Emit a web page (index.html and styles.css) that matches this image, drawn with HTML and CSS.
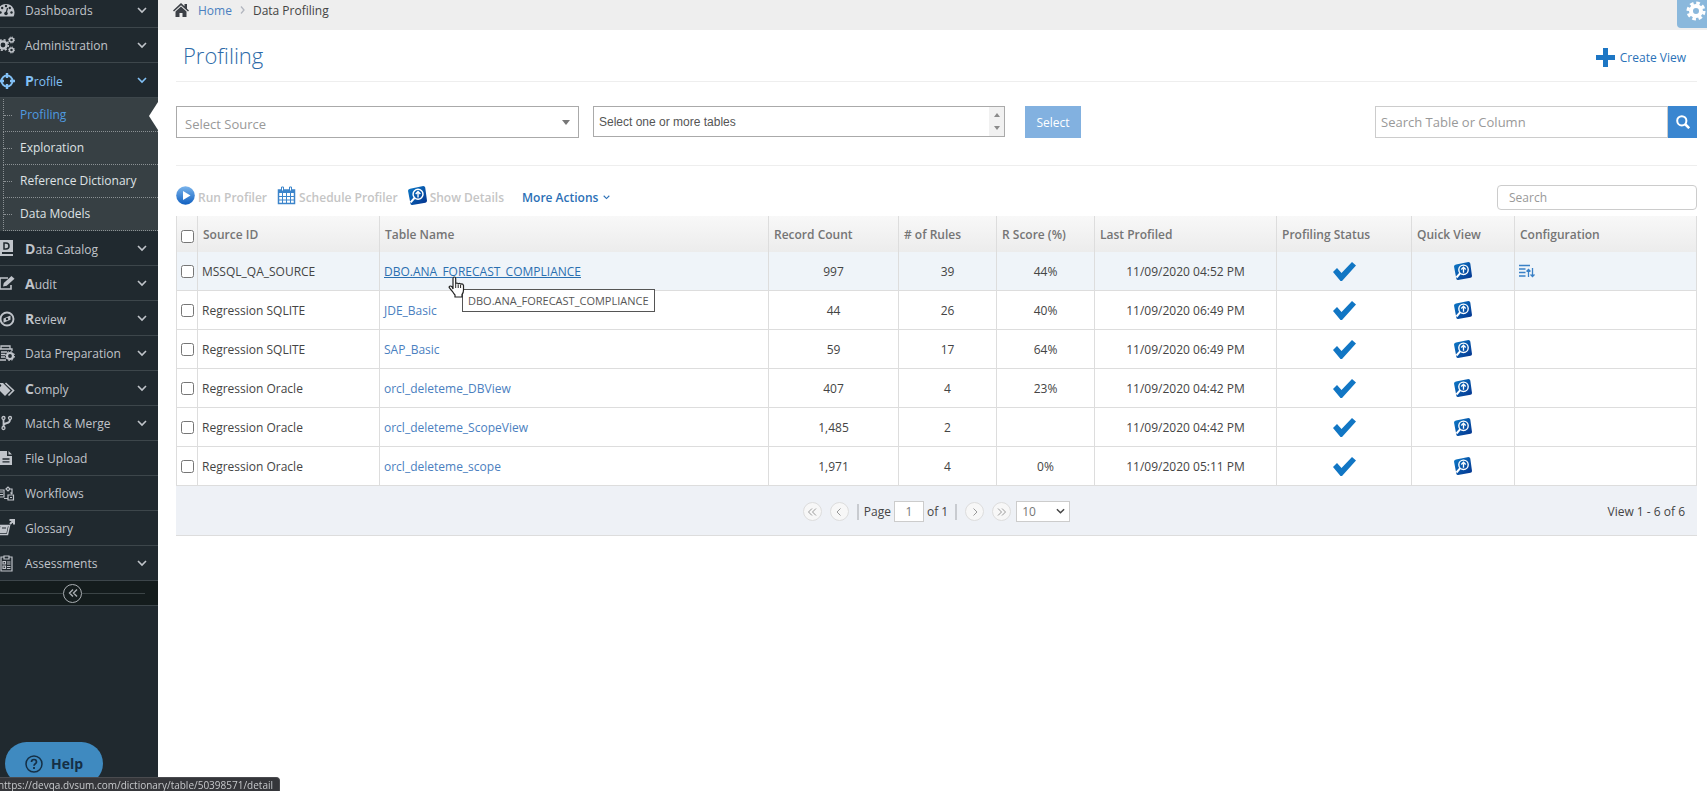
FILE: index.html
```
<!DOCTYPE html>
<html lang="en">

<head>
    <meta charset="UTF-8">
    <meta name="viewport" content="width=device-width, initial-scale=1.0">
    <title>Data Profiling</title>
    <link rel="stylesheet" href="styles.css">
</head>

<body>
    <!-- Shared icons -->
    <svg class="sprite" aria-hidden="true">
        <symbol id="chevron" viewBox="0 0 10 7"><path d="M1 1l4 4 4-4" fill="none" stroke="currentColor" stroke-width="1.6"/></symbol>
        <symbol id="check" viewBox="0 0 24 19"><path d="M1 10l4-4 4.500 5L20 0l4 3.500L10 19 8.500 19z" fill="#1176c4"/></symbol>
        <symbol id="quick" viewBox="0 0 18 18">
            <path d="M2 2.500L14.500 0q1.500 0 1.800 1.500L18 14q0 1.500-1.500 1.800L4 18q-1.500 0-1.700-1.500L0 4.500Q0 3 2 2.500z" fill="url(#tile)"/>
            <circle cx="9.500" cy="7.800" r="4.700" fill="none" stroke="#fff" stroke-width="1.400"/>
            <path d="M6.200 11.200L2.500 15.500" stroke="#fff" stroke-width="2" fill="none"/>
            <path d="M9.500 10.800V6.500M7.300 7.500l2.200-2.300 2.200 2.300" stroke="#fff" stroke-width="1.300" fill="none"/>
        </symbol>
        <defs>
            <linearGradient id="tile" x1="0" y1="0" x2="1" y2="1">
                <stop offset="0" stop-color="#0e7cc9"/>
                <stop offset="1" stop-color="#03318c"/>
            </linearGradient>
            <linearGradient id="ball" x1="0" y1="0" x2="0" y2="1">
                <stop offset="0" stop-color="#7ab4ec"/>
                <stop offset="1" stop-color="#0f5fc0"/>
            </linearGradient>
        </defs>
    </svg>

    <div class="layout">
        <nav class="sidebar">
            <ul class="menu">
                <li><a href="#">
                    <svg class="menu-icon" viewBox="0 0 18 18"><path d="M1.500 15.500A8.500 8.500 0 1 1 16.500 15.500z" fill="currentColor"/><g fill="#20292f"><circle cx="3.500" cy="11.500" r="1.200"/><circle cx="5.200" cy="7" r="1.200"/><circle cx="9" cy="5" r="1.200"/><circle cx="12.800" cy="7" r="1.200"/><circle cx="14.500" cy="11.500" r="1.200"/><circle cx="9" cy="12.500" r="1.800"/></g><path d="M9 12.500L10.500 7" stroke="#20292f" stroke-width="1.200"/></svg>
                    <span>Dashboards</span><svg class="arrow"><use href="#chevron"/></svg></a></li>
                <li><a href="#">
                    <svg class="menu-icon" viewBox="0 0 18 18" fill="none" stroke="currentColor"><circle cx="6" cy="9" r="3.600" stroke-width="2.400"/><circle cx="6" cy="9" r="5.300" stroke-width="1.600" stroke-dasharray="2.100 2.060"/><circle cx="14.500" cy="4" r="2" stroke-width="1.500"/><circle cx="14.500" cy="4" r="3" stroke-dasharray="1.200 1.150"/><circle cx="14.500" cy="14" r="2" stroke-width="1.500"/><circle cx="14.500" cy="14" r="3" stroke-dasharray="1.200 1.150"/></svg>
                    <span>Administration</span><svg class="arrow"><use href="#chevron"/></svg></a></li>
                <li class="open"><a href="#">
                    <svg class="menu-icon" viewBox="0 0 18 18" fill="none" stroke="currentColor"><circle cx="10" cy="10" r="5.500" stroke-width="2"/><path d="M10 2v5M10 13v5M2 10h5M13 10h5" stroke-width="2.400"/></svg>
                    <span><b>P</b>rofile</span><svg class="arrow"><use href="#chevron"/></svg></a>
                    <ul class="submenu">
                        <li class="active"><a href="#">Profiling</a></li>
                        <li><a href="#">Exploration</a></li>
                        <li><a href="#">Reference Dictionary</a></li>
                        <li><a href="#">Data Models</a></li>
                    </ul>
                </li>
                <li><a href="#">
                    <svg class="menu-icon" viewBox="0 0 18 18"><path d="M2 1h14v12H5v2h11v2H4q-3 0-3-3V2z" fill="currentColor"/><path d="M7 4h2q3 0 3 3t-3 3H7z" fill="none" stroke="#20292f" stroke-width="1.500"/></svg>
                    <span><b>D</b>ata Catalog</span><svg class="arrow"><use href="#chevron"/></svg></a></li>
                <li><a href="#">
                    <svg class="menu-icon" viewBox="0 0 18 18"><path d="M11 4H3v11h11v-4" fill="none" stroke="currentColor" stroke-width="1.600"/><path d="M6 12.500l.8-3.500L14.500 2l3 2.700-7.800 7z" fill="currentColor"/></svg>
                    <span><b>A</b>udit</span><svg class="arrow"><use href="#chevron"/></svg></a></li>
                <li><a href="#">
                    <svg class="menu-icon" viewBox="0 0 18 18"><circle cx="10" cy="10" r="6.500" fill="none" stroke="currentColor" stroke-width="1.900"/><path d="M13.500 6.500v4.200l-7 3V9.500z" fill="currentColor"/><circle cx="10" cy="10" r="1.200" fill="#20292f"/></svg>
                    <span><b>R</b>eview</span><svg class="arrow"><use href="#chevron"/></svg></a></li>
                <li><a href="#">
                    <svg class="menu-icon" viewBox="0 0 18 18" fill="none" stroke="currentColor"><path d="M4 5V2h9v3M2 5h13v2M2 5v11h7M4 8h6M4 10.500h4M4 13h4" stroke-width="1.300"/><circle cx="13" cy="12" r="3" stroke-width="2.200"/><circle cx="13" cy="12" r="4.500" stroke-dasharray="1.800 1.730"/></svg>
                    <span>Data Preparation</span><svg class="arrow"><use href="#chevron"/></svg></a></li>
                <li><a href="#">
                    <svg class="menu-icon" viewBox="0 0 18 18"><path d="M0 4h6l7.500 7.500-5.500 5.500L0 9z" fill="currentColor"/><path d="M8.500 4l8 7.500-5 5" fill="none" stroke="currentColor" stroke-width="1.600"/><circle cx="3" cy="6.500" r="1.200" fill="#20292f"/></svg>
                    <span><b>C</b>omply</span><svg class="arrow"><use href="#chevron"/></svg></a></li>
                <li><a href="#">
                    <svg class="menu-icon" viewBox="0 0 18 18" fill="none" stroke="currentColor"><circle cx="6.500" cy="4" r="1.500" stroke-width="1.300"/><circle cx="13" cy="4" r="1.500" stroke-width="1.300"/><circle cx="6.500" cy="14" r="1.500" stroke-width="1.300"/><path d="M6.500 5.500v7M13 5.500q0 3-3 3.500t-3.500 2.500" stroke-width="1.800"/></svg>
                    <span>Match &amp; Merge</span><svg class="arrow"><use href="#chevron"/></svg></a></li>
                <li><a href="#">
                    <svg class="menu-icon" viewBox="0 0 18 18"><path d="M3 2h7v5h5v9H3zM11.500 2L15 5.500h-3.500z" fill="currentColor"/><path d="M5.500 10h7M5.500 12.800h7" stroke="#20292f" stroke-width="1.300"/></svg>
                    <span>File Upload</span></a></li>
                <li><a href="#">
                    <svg class="menu-icon" viewBox="0 0 18 18" fill="none" stroke="currentColor" stroke-width="1.200"><path d="M2 6h5v7H2M3 8h3M3 10.500h3M9 5l2-2 2 2-2 2zM13 5h2v5M15 10l-1.500-1.500M7 14.500h4M11 11h5.500v5H11zM13 13.500h2"/></svg>
                    <span>Workflows</span></a></li>
                <li><a href="#">
                    <svg class="menu-icon" viewBox="0 0 18 18" fill="none" stroke="currentColor"><path d="M3 6.500h9.500l-2 9H2" stroke-width="1.500"/><path d="M3.500 7l-2 7h8l1.500-7z" fill="currentColor" stroke="none"/><path d="M5 9h4" stroke="#20292f"/><path d="M12.500 1H17v4.500M17 1l-4 4" stroke-width="2"/></svg>
                    <span>Glossary</span></a></li>
                <li><a href="#">
                    <svg class="menu-icon" viewBox="0 0 18 18" fill="none" stroke="currentColor" stroke-width="1.200"><path d="M7 3H4v14h11V3h-3M7 2h5v3H7zM6 7.500h2.500V10H6zM6 12h2.500v2.500H6zM10 8h3.500M10 10h3.500M10 12.500h3.500M10 14.500h3.500"/></svg>
                    <span>Assessments</span><svg class="arrow"><use href="#chevron"/></svg></a></li>
            </ul>
            <div class="collapse">
                <button type="button" aria-label="Collapse menu"><svg viewBox="0 0 10 10"><path d="M5 1.500L1.500 5 5 8.500M9 1.500L5.500 5 9 8.500" fill="none" stroke="currentColor" stroke-width="1.400"/></svg></button>
            </div>
        </nav>

        <div class="content">
            <header class="breadcrumbs">
                <svg class="home" viewBox="0 0 16 14"><path d="M8 0l3.500 3.300V1H14v4.700L16 7.500l-1 1L8 2.200 1 8.500l-1-1z"/><path d="M8 3.500l5.500 5V14h-4v-4h-3v4h-4V8.500z"/></svg>
                <a href="#">Home</a>
                <svg class="crumb-sep" viewBox="0 0 5 8"><path d="M1 .5L4 4 1 7.500" fill="none" stroke="#b2b6bf" stroke-width="1.300"/></svg>
                <span>Data Profiling</span>
            </header>
            <button type="button" class="settings" aria-label="Settings"><svg viewBox="0 0 20 20"><circle cx="10" cy="10" r="5" fill="none" stroke="#fff" stroke-width="4"/><circle cx="10" cy="10" r="8" fill="none" stroke="#fff" stroke-width="3" stroke-dasharray="3.600 2.680"/></svg></button>

            <main>
                <div class="title-row">
                    <h1>Profiling</h1>
                    <a class="create" href="#"><svg viewBox="0 0 19 19"><path d="M7 0h5v7h7v5h-7v7H7v-7H0V7h7z" fill="#1d76c4"/></svg>Create View</a>
                </div>

                <form class="filters">
                    <div class="source">
                        <select aria-label="Source"><option>Select Source</option></select>
                    </div>
                    <div class="tables">
                        <textarea aria-label="Tables" rows="1" readonly>Select one or more tables</textarea>
                        <div class="spinner">
                            <svg viewBox="0 0 6 4"><path d="M0 4l3-4 3 4z"/></svg>
                            <svg viewBox="0 0 6 4"><path d="M0 0l3 4 3-4z"/></svg>
                        </div>
                    </div>
                    <button type="button" class="select-btn">Select</button>
                    <div class="lookup">
                        <input type="text" placeholder="Search Table or Column" aria-label="Search Table or Column">
                        <button type="button" aria-label="Search"><svg viewBox="0 0 14 14" fill="none" stroke="#fff"><circle cx="5.800" cy="5.800" r="4.600" stroke-width="2"/><path d="M9 9l4.200 4.200" stroke-width="2.500"/></svg></button>
                    </div>
                </form>

                <div class="toolbar">
                    <button type="button" disabled><svg viewBox="0 0 19 19"><circle cx="9.500" cy="9.500" r="9.300" fill="url(#ball)"/><path d="M7 5l7.500 4.500L7 14z" fill="#fff"/></svg>Run Profiler</button>
                    <button type="button" disabled><svg viewBox="0 0 19 19" fill="none" stroke="#3c85cb"><path d="M1.500 4h16v13.500h-16z" stroke-width="1.500"/><path d="M1.500 5.500h16" stroke-width="3"/><path d="M1.500 10.500h16M1.500 14h16M5.500 7v10M9.500 7v10M13.500 7v10"/><path d="M4.500 1h2v4h-2zM12.500 1h2v4h-2z" fill="#fff"/></svg>Schedule Profiler</button>
                    <button type="button" disabled><svg><use href="#quick"/></svg>Show Details</button>
                    <button type="button" class="more">More Actions<svg><use href="#chevron"/></svg></button>
                    <input class="search" type="text" placeholder="Search" aria-label="Search">
                </div>

                <table class="grid">
                    <colgroup>
                        <col class="c-check"><col class="c-source"><col><col class="c-count"><col class="c-num"><col class="c-num"><col class="c-date"><col class="c-status"><col class="c-quick"><col class="c-config">
                    </colgroup>
                    <thead>
                        <tr>
                            <th><input type="checkbox" aria-label="Select all"></th>
                            <th>Source ID</th>
                            <th>Table Name</th>
                            <th>Record Count</th>
                            <th># of Rules</th>
                            <th>R Score (%)</th>
                            <th>Last Profiled</th>
                            <th>Profiling Status</th>
                            <th>Quick View</th>
                            <th>Configuration</th>
                        </tr>
                    </thead>
                    <tbody>
                        <tr class="hover">
                            <td><input type="checkbox" aria-label="Select row"></td>
                            <td>MSSQL_QA_SOURCE</td>
                            <td class="has-tip"><a href="#">DBO.ANA_FORECAST_COMPLIANCE</a>
                                <svg class="pointer" viewBox="0 0 17 22"><path d="M5 13V2.500q0-1.500 1.300-1.500t1.400 1.500V8q0-1 1.200-1t1.300 1.300q0-1 1.200-1t1.200 1.300q.2-.8 1.300-.8T15.500 9.500V14q0 3-1.500 4.500V21H7v-2q-1-1-2.500-3.500L1.500 12q-.8-1.200.2-1.800T4 10.800z" fill="#fff" stroke="#222" stroke-width="1.200"/><path d="M7.700 8v4M10.200 8.500V12M12.600 9v3" stroke="#222" fill="none"/></svg>
                                <div class="tip">DBO.ANA_FORECAST_COMPLIANCE</div>
                            </td>
                            <td>997</td>
                            <td>39</td>
                            <td>44%</td>
                            <td>11/09/2020 04:52 PM</td>
                            <td><svg class="ok"><use href="#check"/></svg></td>
                            <td><svg class="quick"><use href="#quick"/></svg></td>
                            <td><svg class="config" viewBox="0 0 16 14" fill="none" stroke="#3a80c6"><path d="M0 1.500h11M0 5h6.500M0 8.500h6.500M0 12h6.500" stroke-width="1.500"/><path d="M9.500 13V5.500M7.500 7.500l2-2 2 2M13.500 4v8M11.500 10.500l2 2 2-2" stroke-width="1.300"/></svg></td>
                        </tr>
                        <tr>
                            <td><input type="checkbox" aria-label="Select row"></td>
                            <td>Regression SQLITE</td>
                            <td><a href="#">JDE_Basic</a></td>
                            <td>44</td>
                            <td>26</td>
                            <td>40%</td>
                            <td>11/09/2020 06:49 PM</td>
                            <td><svg class="ok"><use href="#check"/></svg></td>
                            <td><svg class="quick"><use href="#quick"/></svg></td>
                            <td></td>
                        </tr>
                        <tr>
                            <td><input type="checkbox" aria-label="Select row"></td>
                            <td>Regression SQLITE</td>
                            <td><a href="#">SAP_Basic</a></td>
                            <td>59</td>
                            <td>17</td>
                            <td>64%</td>
                            <td>11/09/2020 06:49 PM</td>
                            <td><svg class="ok"><use href="#check"/></svg></td>
                            <td><svg class="quick"><use href="#quick"/></svg></td>
                            <td></td>
                        </tr>
                        <tr>
                            <td><input type="checkbox" aria-label="Select row"></td>
                            <td>Regression Oracle</td>
                            <td><a href="#">orcl_deleteme_DBView</a></td>
                            <td>407</td>
                            <td>4</td>
                            <td>23%</td>
                            <td>11/09/2020 04:42 PM</td>
                            <td><svg class="ok"><use href="#check"/></svg></td>
                            <td><svg class="quick"><use href="#quick"/></svg></td>
                            <td></td>
                        </tr>
                        <tr>
                            <td><input type="checkbox" aria-label="Select row"></td>
                            <td>Regression Oracle</td>
                            <td><a href="#">orcl_deleteme_ScopeView</a></td>
                            <td>1,485</td>
                            <td>2</td>
                            <td></td>
                            <td>11/09/2020 04:42 PM</td>
                            <td><svg class="ok"><use href="#check"/></svg></td>
                            <td><svg class="quick"><use href="#quick"/></svg></td>
                            <td></td>
                        </tr>
                        <tr>
                            <td><input type="checkbox" aria-label="Select row"></td>
                            <td>Regression Oracle</td>
                            <td><a href="#">orcl_deleteme_scope</a></td>
                            <td>1,971</td>
                            <td>4</td>
                            <td>0%</td>
                            <td>11/09/2020 05:11 PM</td>
                            <td><svg class="ok"><use href="#check"/></svg></td>
                            <td><svg class="quick"><use href="#quick"/></svg></td>
                            <td></td>
                        </tr>
                    </tbody>
                </table>

                <div class="pager">
                    <div class="pager-controls">
                        <button type="button" aria-label="First page"><svg viewBox="0 0 10 10"><path d="M5 1.500L1.500 5 5 8.500M9 1.500L5.500 5 9 8.500"/></svg></button>
                        <button type="button" aria-label="Previous page"><svg viewBox="0 0 10 10"><path d="M6.500 1.500L3 5l3.500 3.500"/></svg></button>
                        <label class="page">Page <input type="text" value="1"> of 1</label>
                        <button type="button" aria-label="Next page"><svg viewBox="0 0 10 10"><path d="M3.500 1.500L7 5 3.500 8.500"/></svg></button>
                        <button type="button" aria-label="Last page"><svg viewBox="0 0 10 10"><path d="M1 1.500L4.500 5 1 8.500M5 1.500L8.500 5 5 8.500"/></svg></button>
                        <div class="page-size">
                            <select aria-label="Rows per page"><option>10</option></select>
                            <svg><use href="#chevron"/></svg>
                        </div>
                    </div>
                    <div class="view-info">View 1 - 6 of 6</div>
                </div>
            </main>
        </div>
    </div>

    <button type="button" class="help"><svg viewBox="0 0 18 18" fill="none" stroke="currentColor" stroke-width="1.500"><circle cx="9" cy="9" r="8"/><path d="M6.500 7q0-2.500 2.500-2.500T11.500 7q0 1-1.200 1.800T9 10.800" stroke-width="1.700"/><path d="M9 12v2" stroke-width="1.800"/></svg>Help</button>
    <div class="status"><span>https://devqa.dvsum.com/dictionary/table/50398571/detail</span></div>
</body>

</html>
```
FILE: styles.css
```
* {
    box-sizing: border-box;
}

body {
    margin: 0;
    font-family: "Open Sans", sans-serif;
    font-size: 12px;
    color: #444;
    background-color: #fff;
}

button,
input,
select,
textarea {
    font-family: inherit;
    font-size: 12px;
}

button {
    padding: 0;
    border: none;
    background: none;
}

a {
    color: #4a80c0;
    text-decoration: none;
}

.sprite {
    position: absolute;
    width: 0;
    height: 0;
}

.layout {
    display: flex;
    min-height: 100vh;
}

/* Sidebar */
.sidebar {
    flex: 0 0 158px;
    background-color: #20292f;
    overflow: hidden;
}

.menu,
.submenu {
    list-style: none;
    margin: 0;
    padding: 0;
}

.menu {
    margin-top: -7px;
}

.menu > li > a {
    display: flex;
    align-items: center;
    height: 35px;
    padding-right: 11px;
    border-bottom: 1px solid #3d464b;
    color: #c0c4ca;
}

.menu > .open > a {
    color: #82c0f5;
}

.menu-icon {
    width: 18px;
    height: 18px;
    margin-left: -3px;
    margin-right: 10px;
}

.menu b {
    font-size: 14px;
}

.arrow {
    width: 10px;
    height: 7px;
    margin-left: auto;
}

.submenu {
    padding-top: 1px;
    padding-left: 3px;
    background-color: #374044;
}

.submenu li {
    position: relative;
    border-left: 1px dotted #8b9194;
    border-bottom: 1px dotted #8b9194;
}

.submenu li::before {
    content: "";
    position: absolute;
    top: 16px;
    left: 0;
    width: 8px;
    border-top: 1px dotted #8b9194;
}

.submenu a {
    display: block;
    padding-left: 16px;
    line-height: 32px;
    color: #dfe2e4;
}

.submenu .active a {
    color: #4f9be0;
}

.submenu .active::after {
    content: "";
    position: absolute;
    top: 3px;
    right: 0;
    border: 14px solid transparent;
    border-left: none;
    border-right: 9px solid #fff;
}

.collapse {
    display: flex;
    align-items: center;
    height: 25px;
    padding-right: 13px;
    background-color: #141c1d;
    border-bottom: 1px solid #3d464b;
}

.collapse::before,
.collapse::after {
    content: "";
    flex: 1;
    height: 1px;
    background-color: #3b4446;
}

.collapse button {
    display: flex;
    align-items: center;
    justify-content: center;
    width: 19px;
    height: 19px;
    border: 1px solid #a9aeb2;
    border-radius: 50%;
    color: #a9aeb2;
}

.collapse svg {
    width: 10px;
    height: 10px;
}

/* Content */
.content {
    flex: 1;
    min-width: 0;
    position: relative;
}

.breadcrumbs {
    display: flex;
    align-items: center;
    height: 30px;
    padding: 0 15px 10px;
    background-color: #eee;
}

.home {
    width: 16px;
    height: 14px;
    margin-right: 9px;
    fill: #3c4046;
}

.crumb-sep {
    width: 5px;
    height: 8px;
    margin: 0 8px;
}

.settings {
    position: absolute;
    top: 0;
    right: 0;
    width: 30px;
    height: 28px;
    padding: 0 0 6px 9px;
    background-color: #8ab8dc;
    border-radius: 0 0 0 4px;
    overflow: hidden;
}

.settings svg {
    display: block;
    width: 20px;
    height: 20px;
}

main {
    padding: 0 10px 0 18px;
}

.title-row {
    display: flex;
    align-items: center;
    justify-content: space-between;
    height: 52px;
    padding: 3px 11px 0 7px;
    border-bottom: 1px solid #eee;
}

h1 {
    margin: 0;
    padding-bottom: 4px;
    font-size: 22px;
    font-weight: 300;
    color: #2c6aa8;
}

.create {
    display: flex;
    align-items: center;
    gap: 5px;
    color: #2a72b8;
}

.create svg {
    width: 19px;
    height: 19px;
}

.filters {
    display: flex;
    align-items: flex-start;
    height: 84px;
    padding-top: 24px;
    border-bottom: 1px solid #eee;
}

.source {
    position: relative;
    width: 403px;
    margin-right: 14px;
}

.source select {
    width: 100%;
    height: 32px;
    padding: 4px 8px 0;
    border: 1px solid #aaa;
    background-color: #fff;
    font-size: 13px;
    color: #999;
    appearance: none;
}

.source::after {
    content: "";
    position: absolute;
    top: 14px;
    right: 9px;
    border: 4px solid transparent;
    border-top: 5px solid #777;
    border-bottom: none;
}

.tables {
    display: flex;
    width: 412px;
    height: 31px;
    margin-right: 20px;
    border: 1px solid #aaa;
}

.tables textarea {
    flex: 1;
    padding: 8px 5px 6px;
    border: none;
    resize: none;
    overflow: hidden;
    background-color: #fff;
    font-family: "Liberation Sans", sans-serif;
    color: #555;
}

.spinner {
    display: flex;
    flex-direction: column;
    align-items: center;
    justify-content: space-between;
    width: 15px;
    padding: 6px 0;
    background-color: #f1f1f1;
}

.spinner svg {
    width: 6px;
    height: 4px;
    fill: #8a8a8a;
}

.select-btn {
    width: 56px;
    height: 32px;
    background-color: #82b1e0;
    color: #fff;
}

.lookup {
    display: flex;
    width: 322px;
    margin-left: auto;
}

.lookup input {
    flex: 1;
    min-width: 0;
    height: 32px;
    padding: 0 5px;
    border: 1px solid #ccc;
    font-size: 13px;
}

.lookup button {
    display: flex;
    align-items: center;
    justify-content: center;
    width: 29px;
    background-color: #3a86d0;
}

.lookup svg {
    width: 14px;
    height: 14px;
}

input::placeholder {
    color: #999;
}

/* Toolbar above the grid */
.toolbar {
    display: flex;
    align-items: center;
    height: 50px;
    padding-top: 12px;
    gap: 10px;
}

.toolbar button {
    display: flex;
    align-items: center;
    gap: 3px;
    font-weight: 600;
    color: #c5c5c5;
}

.toolbar button svg {
    width: 19px;
    height: 19px;
    margin-bottom: 4px;
}

.toolbar .more {
    margin-left: 8px;
    color: #2c70b6;
}

.toolbar .more svg {
    width: 7px;
    height: 5px;
    margin: 0 0 0 2px;
}

.search {
    width: 200px;
    height: 25px;
    margin-left: auto;
    padding: 0 11px;
    border: 1px solid #ccc;
    border-radius: 4px;
}

/* Grid */
.grid {
    width: 100%;
    table-layout: fixed;
    border-collapse: separate;
    border-spacing: 0;
    border-left: 1px solid #ddd;
}

.c-check { width: 21px; }
.c-source { width: 182px; }
.c-count { width: 130px; }
.c-num { width: 98px; }
.c-date { width: 182px; }
.c-status { width: 135px; }
.c-quick { width: 103px; }
.c-config { width: 182px; }

.grid th {
    height: 36px;
    padding: 0 5px;
    border-right: 1px solid #ddd;
    background: linear-gradient(#f8f8f8, #ececec);
    font-weight: 600;
    text-align: left;
    color: #757575;
}

.grid td {
    height: 39px;
    padding: 0 4px;
    border-right: 1px solid #ddd;
    border-bottom: 1px solid #ddd;
    text-align: center;
}

.grid td:nth-child(2),
.grid td:nth-child(3),
.grid td:last-child {
    text-align: left;
}

.grid th:first-child,
.grid td:first-child {
    padding: 0;
    text-align: center;
}

.grid input {
    display: block;
    margin: 0 auto;
}

.grid th input {
    margin-top: 4px;
}

.grid td svg {
    display: block;
}

.grid .hover td {
    background-color: #eff4f9;
}

.grid .hover a {
    color: #2a6fb0;
    text-decoration: underline;
}

.grid .ok {
    width: 24px;
    height: 19px;
    margin: 0 auto;
}

.grid .quick {
    width: 18px;
    height: 18px;
    margin: 0 auto;
}

.grid .config {
    width: 16px;
    height: 14px;
}

.has-tip {
    position: relative;
}

.pointer {
    position: absolute;
    top: 24px;
    left: 68px;
    width: 17px;
    height: 22px;
    z-index: 2;
}

.tip {
    position: absolute;
    top: 37px;
    left: 82px;
    z-index: 1;
    padding: 0 5px;
    border: 1px solid #555;
    background-color: #fff;
    font-size: 11px;
    line-height: 21px;
    white-space: nowrap;
    color: #575757;
}

/* Pager */
.pager {
    display: grid;
    grid-template-columns: 1fr auto 1fr;
    align-items: center;
    height: 50px;
    padding-top: 2px;
    background-color: #eef1f6;
    border-bottom: 1px solid #ddd;
}

.pager-controls {
    grid-column: 2;
    display: flex;
    align-items: center;
    gap: 8px;
}

.pager button {
    display: flex;
    align-items: center;
    justify-content: center;
    width: 19px;
    height: 19px;
    border: 1px solid #ddd;
    border-radius: 50%;
    background-color: #f7f7f7;
}

.pager button svg {
    width: 10px;
    height: 10px;
    fill: none;
    stroke: #999;
}

.page {
    display: flex;
    align-items: center;
    gap: 3px;
}

.page::before,
.page::after {
    content: "";
    width: 2px;
    height: 16px;
    margin-right: 2px;
    background-color: #c8cbd0;
}

.page::after {
    margin: 0 0 0 4px;
}

.page input {
    width: 30px;
    height: 21px;
    padding: 0;
    border: 1px solid #ccc;
    text-align: center;
    color: #777;
}

.page-size {
    position: relative;
    margin-left: -3px;
}

.page-size select {
    width: 54px;
    height: 21px;
    padding: 0 5px;
    border: 1px solid #ccc;
    background-color: #fff;
    color: #777;
    appearance: none;
}

.page-size svg {
    position: absolute;
    top: 7px;
    right: 5px;
    width: 9px;
    height: 7px;
}

.view-info {
    padding-right: 12px;
    text-align: right;
}

/* Fixed to the window */
.help {
    position: fixed;
    left: 5px;
    bottom: 6px;
    display: flex;
    align-items: center;
    gap: 8px;
    height: 43px;
    padding: 0 20px;
    border-radius: 22px;
    background-color: #3f8ac0;
    font-size: 14px;
    font-weight: 700;
    color: #152f45;
}

.help svg {
    width: 18px;
    height: 18px;
}

.status {
    position: fixed;
    left: 0;
    bottom: 0;
    display: flex;
    justify-content: flex-end;
    width: 280px;
    height: 14px;
    padding-right: 6px;
    border: 1px solid #4a4b4f;
    border-width: 1px 1px 0 0;
    border-radius: 0 4px 0 0;
    background-color: #35363a;
    overflow: hidden;
    font-size: 10px;
    line-height: 15px;
    white-space: nowrap;
    color: #c6c8cb;
}
```
